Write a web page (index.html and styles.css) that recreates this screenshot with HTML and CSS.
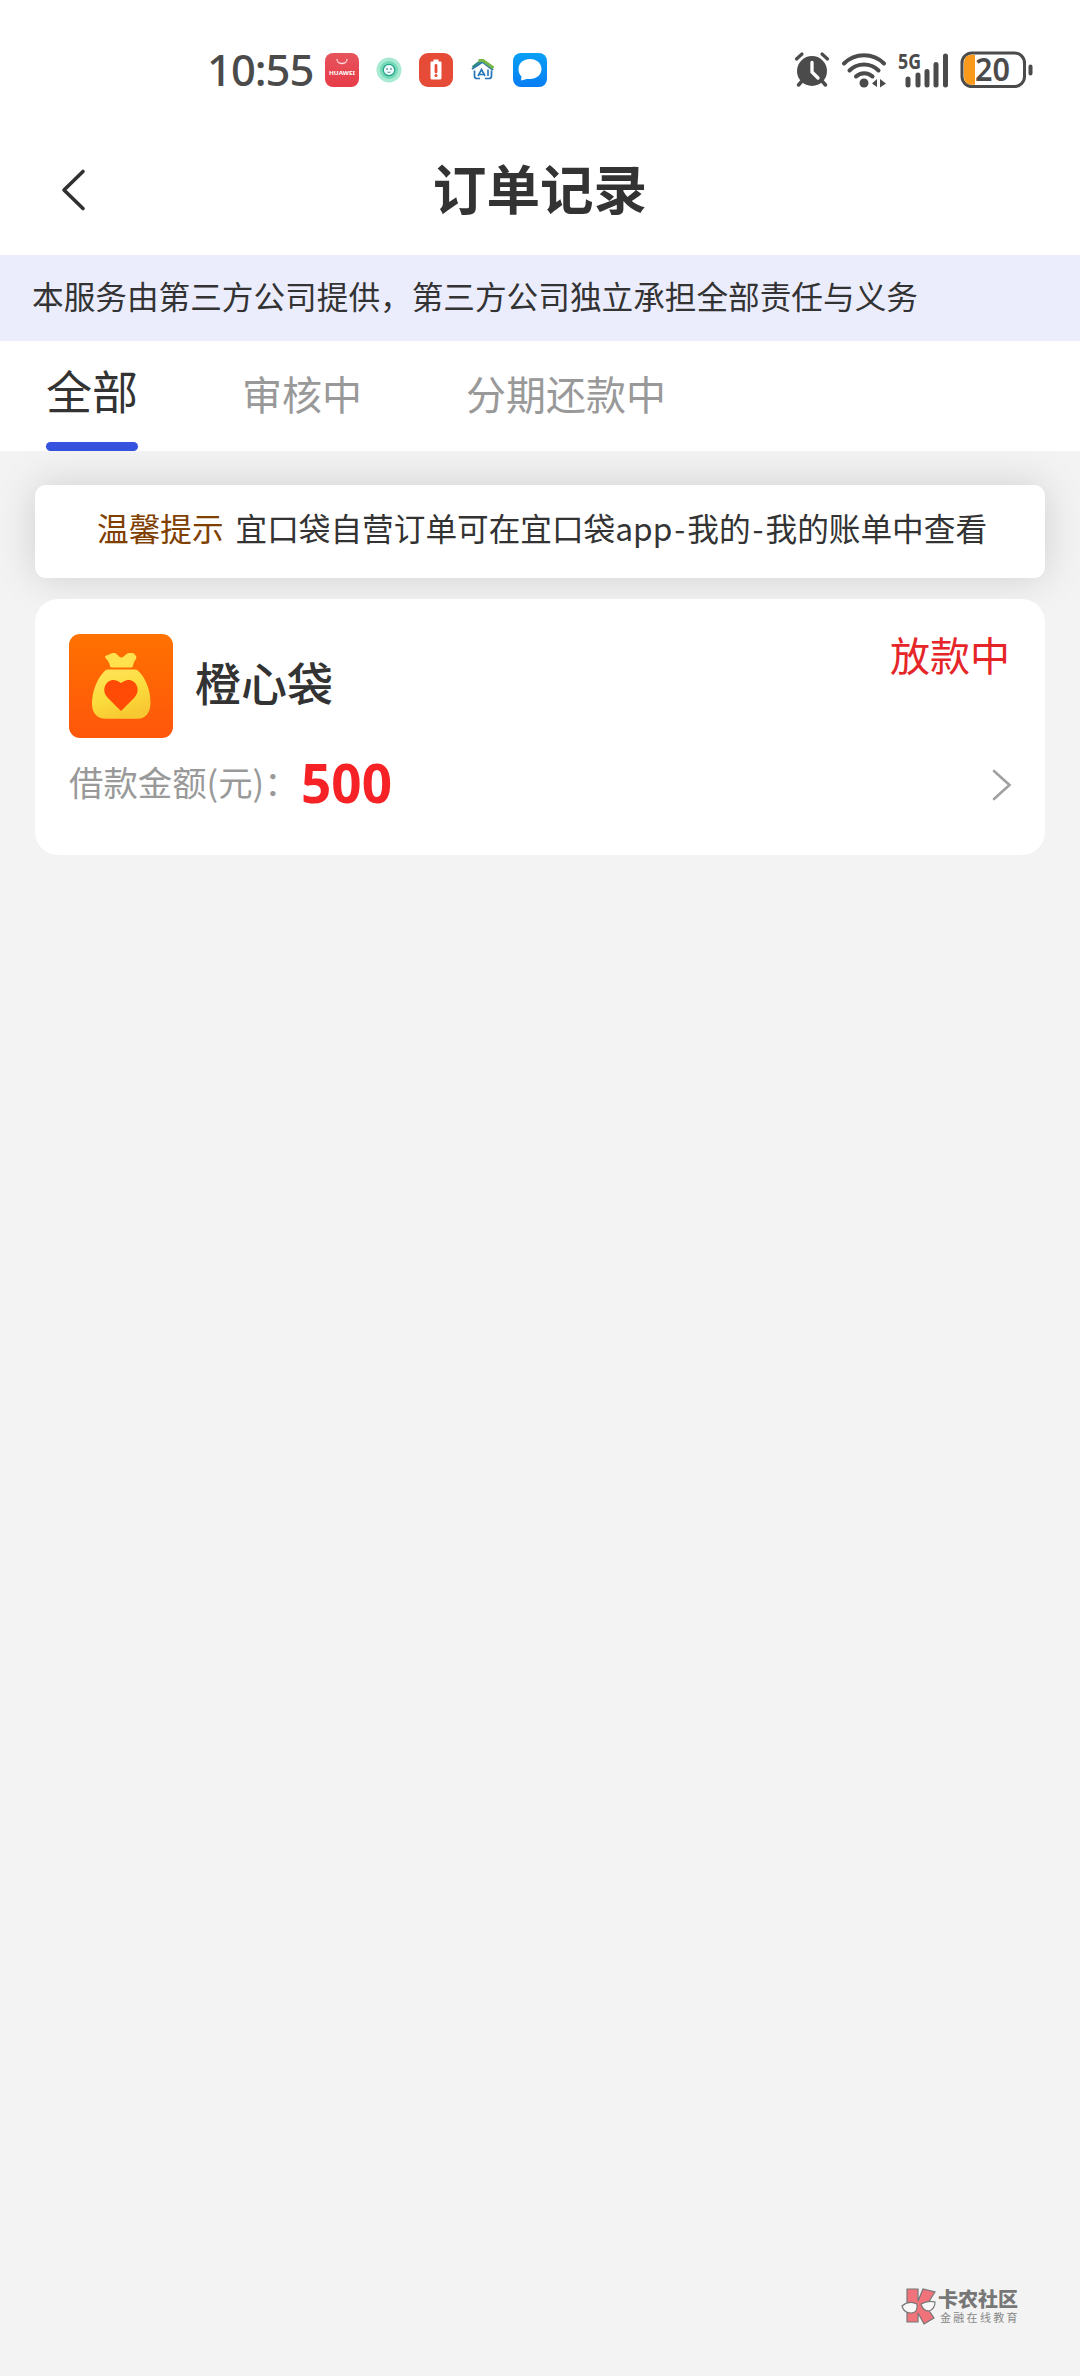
FILE: index.html
```html
<!DOCTYPE html>
<html lang="zh-CN">
<head>
<meta charset="utf-8">
<title>订单记录</title>
<link rel="stylesheet" href="styles.css">
</head>
<body>
<div class="screen">
  <div class="status-bar">
    <span class="clock">10:55</span>
    <div class="apps">
      <svg width="34" height="34" viewBox="0 0 34 34">
        <defs><linearGradient id="hw" x1="0" y1="0" x2="0" y2="1"><stop offset="0" stop-color="#e7545c"/><stop offset="1" stop-color="#e63c48"/></linearGradient></defs>
        <rect width="34" height="34" rx="8" fill="url(#hw)"/>
        <path d="M12 6c0 6 10 6 10 0" fill="none" stroke="#ffd5d8" stroke-width="1.3"/>
        <text class="hw-text" x="17" y="21.5" text-anchor="middle" textLength="26" lengthAdjust="spacingAndGlyphs">HUAWEI</text>
      </svg>
      <svg width="34" height="34" viewBox="0 0 34 34">
        <circle cx="17" cy="17" r="12.5" fill="#a9ead3"/><circle cx="17" cy="17" r="9" fill="#73d9b6"/>
        <circle cx="17" cy="17" r="5.7" fill="#eefbff" stroke="#27a58a" stroke-width="1.2"/>
        <circle cx="15" cy="16" r=".8" fill="#246b67"/><circle cx="19" cy="16" r=".8" fill="#246b67"/>
        <path d="M15.5 19q1.500 1 3 0" fill="none" stroke="#246b67" stroke-width=".7"/>
      </svg>
      <svg width="34" height="34" viewBox="0 0 34 34">
        <rect width="34" height="34" rx="9" fill="#e64b38"/>
        <path d="M14.500 6.500h5v2h2q1 0 1 1v15.500q0 1.500-1.500 1.500h-8q-1.500 0-1.500-1.500V9.500q0-1 1-1h2z" fill="#fff"/>
        <path d="M17 12.500v6.500" stroke="#e64b38" stroke-width="2.800" stroke-linecap="round"/><circle cx="17" cy="22.500" r="1.500" fill="#e64b38"/>
      </svg>
      <svg width="34" height="34" viewBox="0 0 34 34">
        <path d="M6 16 16.500 9l10.500 8" fill="none" stroke="#2675a9" stroke-width="2"/>
        <path d="M6.500 14 15 7.500" fill="none" stroke="#2d8a7d" stroke-width="2.200"/>
        <path d="M12.500 7.500h4.500L27.500 15" fill="none" stroke="#75b648" stroke-width="3"/>
        <path d="M8.500 17.500V23q0 2.500 2.500 2.500h3M19 25.500h4q2.500 0 2.500-2.500v-5.500" fill="none" stroke="#2675b9" stroke-width="1.700"/>
        <path d="M12 23l3.500-6.500L19 23m-5.500-1.500h4M22 16.500V23" fill="none" stroke="#2675b9" stroke-width="1.600"/>
      </svg>
      <svg width="34" height="34" viewBox="0 0 34 34">
        <defs><linearGradient id="msg" x1="0" y1="0" x2="0" y2="1"><stop offset="0" stop-color="#08a0f5"/><stop offset="1" stop-color="#087df3"/></linearGradient></defs>
        <rect width="34" height="34" rx="8" fill="url(#msg)"/>
        <path d="M17 6c6.500 0 11.500 4.300 11.500 10S23.500 26 17 26c-2 0-3.500-.2-5 .4L8 27.500l.5-4C6.500 21.700 5.500 19 5.500 16 5.500 10.300 10.500 6 17 6z" fill="#fff"/>
      </svg>
    </div>
    <div class="system">
      <svg width="252" height="50" viewBox="0 0 252 50">
        <g fill="#4b4b4b" stroke="#4b4b4b" stroke-linecap="round">
          <circle cx="19" cy="23" r="15" stroke="none"/>
          <path d="M3.500 11 9 6M29 6l5.500 5" stroke-width="3.200" fill="none"/>
          <path d="M9 33 5.500 37M29 33l3.500 4" stroke-width="3.500"/>
          <path d="M19 14.500V24l6 6" fill="none" stroke="#fff" stroke-width="3.300"/>
          <g fill="none" stroke-width="4"><path d="M51 15.500c11-11 29-11 40 0"/><path d="M56.500 22.500c8-8 21-8 29 0"/><path d="M63 28.500c4.500-4.500 12-4.500 16.500 0"/></g>
          <circle cx="71" cy="35" r="4.500" stroke="none"/>
          <path d="m79 35.500 5-4.500v8zM87 31l6 4.500-6 4z" stroke="none"/>
          <path d="M115 31v6M125 27v10M134 23.500v13.500M143 16.500v20.500M152.500 8v29" stroke-width="5" fill="none"/>
          <rect x="169" y="5" width="62.500" height="33.500" rx="10" fill="#fff" stroke-width="3"/>
          <path d="M237.500 18.500v7" stroke-width="4"/>
        </g>
        <path d="M182 6.800h-3q-8 0-8 8v14q0 8 8 8h3z" fill="#f99a1c"/>
        <text class="net" x="105" y="21" textLength="23" lengthAdjust="spacingAndGlyphs">5G</text>
        <text class="level" x="182" y="33" textLength="35" lengthAdjust="spacingAndGlyphs">20</text>
      </svg>
    </div>
  </div>

  <header class="nav">
    <svg class="back" width="30" height="50" viewBox="0 0 30 50"><path d="M24 6.500 5 25l19 18.500" fill="none" stroke="#303030" stroke-width="3.600" stroke-linecap="round" stroke-linejoin="round"/></svg>
    <h1 class="title">订单记录</h1>
  </header>

  <div class="notice">本服务由第三方公司提供，第三方公司独立承担全部责任与义务</div>

  <nav class="tabs">
    <div class="tab active">全部</div>
    <div class="tab">审核中</div>
    <div class="tab">分期还款中</div>
  </nav>

  <main class="content">
    <div class="tip"><span class="tip-label">温馨提示</span><span class="tip-text">宜口袋自营订单可在宜口袋app<span class="dash">-</span>我的<span class="dash">-</span>我的账单中查看</span></div>
    <section class="order">
      <div class="order-head">
        <svg class="logo" width="104" height="104" viewBox="0 0 104 104">
          <defs>
            <linearGradient id="bg" x1="0" y1="0" x2="0" y2="1"><stop offset="0" stop-color="#ff7200"/><stop offset="1" stop-color="#ff560b"/></linearGradient>
            <linearGradient id="bag" x1="0" y1="0" x2=".4" y2="1"><stop offset="0" stop-color="#ffe45a"/><stop offset=".6" stop-color="#fbdc3c"/><stop offset="1" stop-color="#f8c832"/></linearGradient>
          </defs>
          <rect width="104" height="104" rx="11" fill="url(#bg)"/>
          <path d="M41 32C40.500 29 39 26.500 36.500 24c-1-2 .5-2.500 2-3 3-.5 4-2.500 7-2 3 .5 4 4.500 7 4.500s4-4.500 8-4.500c3 0 5 0 5.500 2 1 1 2 2 1 4-2 2-2.500 5-3 7q-.5 1.500-2.500 1.500H43q-2 0-2-1.500z" fill="#ffe04d"/>
          <path d="M39 35.500h27q2.500 0 4 2.200c7 7 11.500 19 11.500 31 0 10-5 16-13 16H37c-9 0-14-6-14-15 0-12 5-25 12-32q1.500-2.200 4-2.200z" fill="url(#bag)"/>
          <path d="M52 77 38.500 63.500c-8-8.500.5-21 10-16.500L52 49l3.500-2c9.500-4.500 18 8 10 16.500z" fill="#ff4b05"/>
        </svg>
        <h2 class="name">橙心袋</h2>
        <span class="state">放款中</span>
      </div>
      <div class="order-row">
        <span class="label">借款金额(元)：</span>
        <span class="amount">500</span>
        <svg class="chevron" width="22" height="34" viewBox="0 0 22 34"><path d="M4 4 19.500 18 4 32" fill="none" stroke="#a0a0a0" stroke-width="2.600" stroke-linecap="round"/></svg>
      </div>
    </section>
  </main>

  <footer class="brand">
    <svg width="36" height="38" viewBox="0 0 36 38">
      <path d="M6 2h11v12l5-12 12 3-9 14 8 12-10 6-6-11v9L6 35z" fill="#f0727a" stroke="#777" stroke-width="1.200"/>
      <path d="M1 19q7-6 15-2 1 9-6 9Q3 26 1 19zM20 17q7-4 14-2 0 7-6 9-6 0-8-7z" fill="#f8f8f8" stroke="#777" stroke-width="1.200"/>
    </svg>
    <div class="brand-text"><span class="brand-name">卡农社区</span><span class="brand-sub">金融在线教育</span></div>
  </footer>
</div>
</body>
</html>
```
FILE: styles.css
```css
* { box-sizing: border-box; }
body { margin: 0; background: #f3f3f3; font-family: "Noto Sans CJK SC", "Noto Sans", sans-serif; color: #333; }
.screen { width: 1080px; height: 2376px; display: flex; flex-direction: column; background: #f3f3f3; overflow: hidden; }
h1, h2 { margin: 0; }

.status-bar { height: 130px; flex: none; display: flex; align-items: flex-start; background: #fff; padding: 48px 35px 0 207px; }
.clock { width: 118px; line-height: 43px; font-family: "Noto Sans", sans-serif; font-size: 43.5px; font-weight: 500; color: #4b4b4b; letter-spacing: -1px; white-space: nowrap; }
.apps { display: flex; gap: 13px; padding-top: 5px; }
.system { margin-left: auto; display: flex; }
.system svg { overflow: visible; }
.hw-text { font: 700 6px "Noto Sans", sans-serif; fill: #fff; }
.net { font: 700 21px "Noto Sans", sans-serif; fill: #4b4b4b; }
.level { font: 600 32px "Noto Sans", sans-serif; fill: #4b4b4b; }

.nav { height: 125px; flex: none; display: flex; align-items: flex-start; justify-content: center; background: #fff; position: relative; }
.back { position: absolute; left: 59px; top: 35px; }
.title { font-size: 53.6px; line-height: 80px; font-weight: 700; padding-top: 17px; }

.notice { height: 86px; flex: none; background: #ebedfd; padding-left: 32px; line-height: 81px; font-size: 31.65px; white-space: nowrap; }

.tabs { height: 110px; flex: none; display: flex; gap: 104px; padding-left: 46px; background: #fff; }
.tab { font-size: 40px; line-height: 104px; color: #999; }
.tab.active { display: flex; flex-direction: column; justify-content: space-between; font-size: 46px; line-height: 97px; color: #333; }
.tab.active::after { content: ""; height: 9px; border-radius: 4.500px; background: #3553df; }

.content { padding: 34px 35px 0; display: flex; flex-direction: column; gap: 21px; }
.tip { height: 93px; background: #fff; border-radius: 11px; box-shadow: 0 0 42px rgba(0, 0, 0, .15); display: flex; gap: 12px; padding-left: 62px; font-size: 31.65px; line-height: 85px; white-space: nowrap; }
.tip-label { color: #804000; }
.dash { margin: 0 2px; }

.order { height: 256px; position: relative; background: #fff; border-radius: 23px; padding: 35px 34px 0; }
.order-head { display: flex; align-items: flex-start; }
.name { margin-left: 22px; font-size: 46px; line-height: 95px; font-weight: 500; }
.state { margin-left: auto; font-size: 40px; line-height: 41px; color: #e52528; padding-right: 1px; }
.order-row { display: flex; align-items: flex-start; height: 92px; }
.label { width: 232px; font-size: 34.4px; line-height: 87px; color: #999; white-space: nowrap; }
.amount { font-family: "Noto Sans", sans-serif; font-size: 53px; line-height: 90px; font-weight: 700; color: #f62226; }
.chevron { margin: 29px -1px 0 auto; }

.brand { margin-top: auto; padding: 0 60px 51px 0; display: flex; justify-content: flex-end; gap: 1px; }
.brand-text { display: flex; flex-direction: column; width: 82px; padding-top: 1px; }
.brand-name { font-size: 20px; line-height: 22px; font-weight: 900; color: #777; }
.brand-sub { font-size: 11px; line-height: 15px; letter-spacing: 2.300px; color: #888; padding-left: 2px; white-space: nowrap; }
```
